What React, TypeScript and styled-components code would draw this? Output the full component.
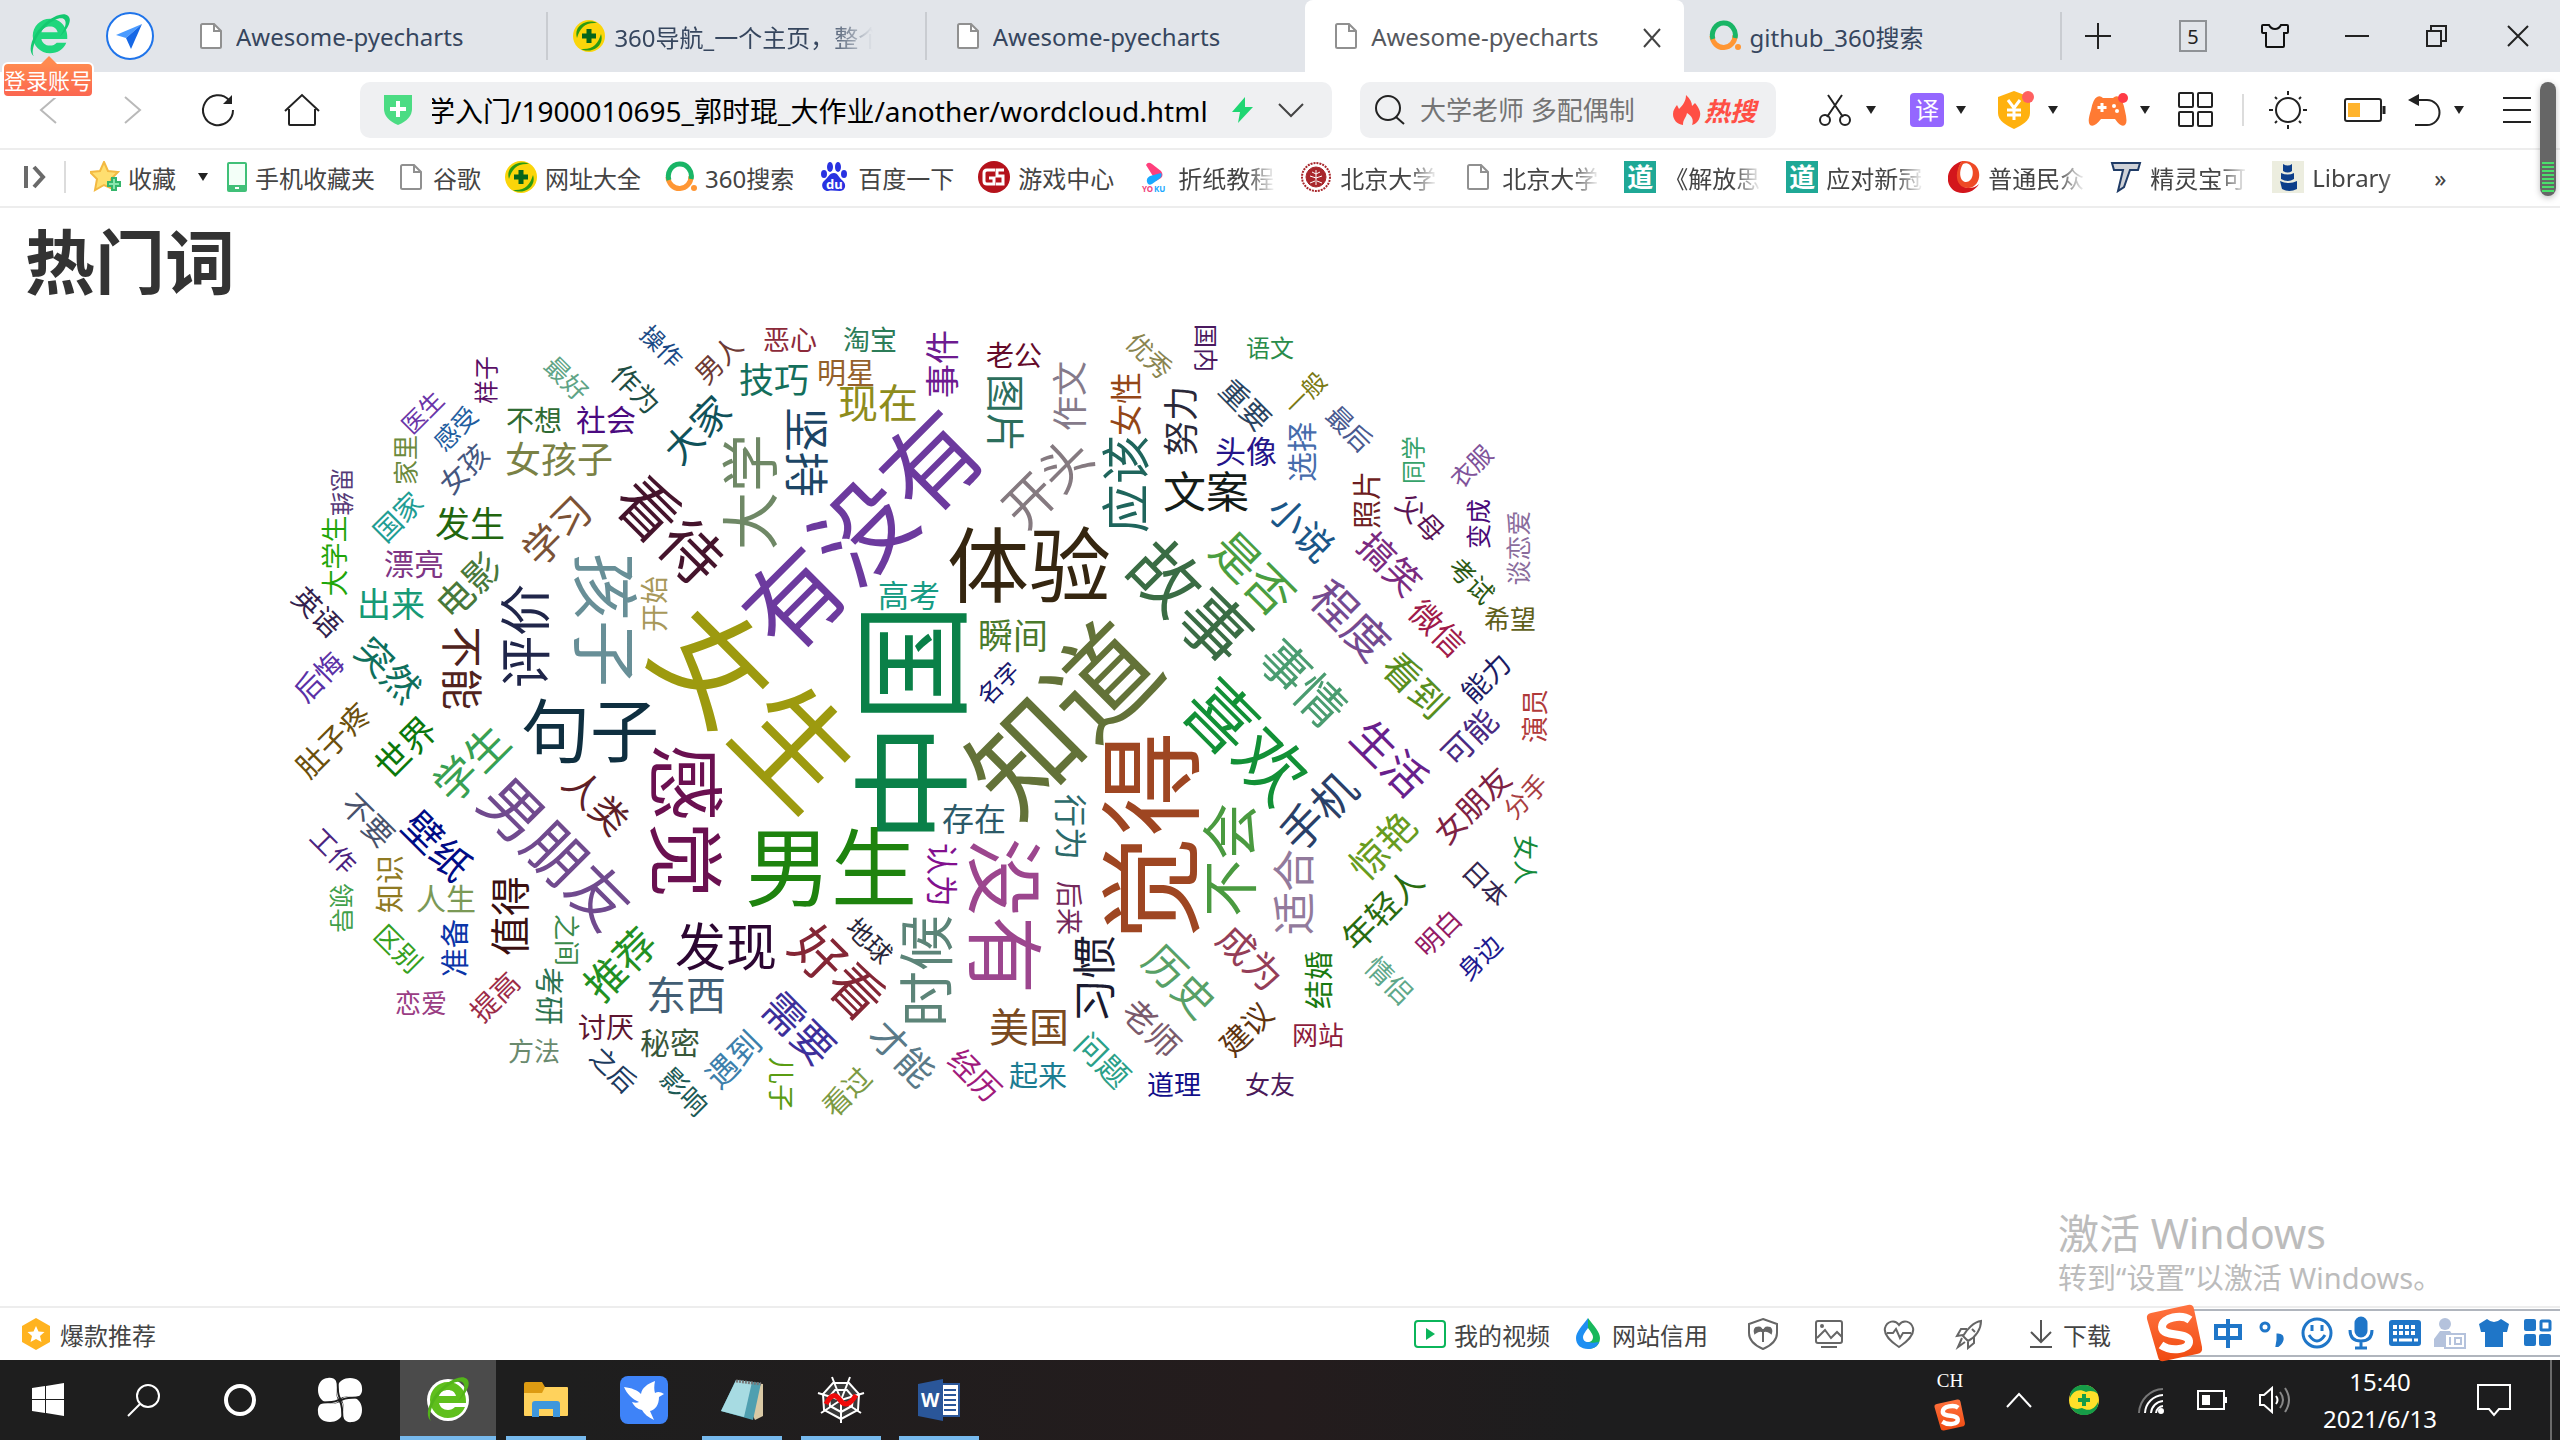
import React, { useLayoutEffect, useRef } from "react";
import styled, { createGlobalStyle, css } from "styled-components";

const FONT = `"Noto Sans", "Noto Sans CJK SC", sans-serif`;

const GlobalStyle = createGlobalStyle`
  * { box-sizing: border-box; }
  body { margin: 0; background: #fff; font-family: ${FONT}; overflow: hidden; }
  button { font: inherit; color: inherit; background: none; border: 0; padding: 0; cursor: pointer; }
  a { color: inherit; text-decoration: none; }
  svg { display: block; flex: none; }
`;

const Screen = styled.div`
  position: relative;
  display: flex;
  flex-direction: column;
  min-height: 100vh;
`;

/* ---------- tab strip ---------- */

const TabStrip = styled.header`
  display: flex;
  align-items: stretch;
  height: 72px;
  background: #e2e5ea;
`;

const StripButton = styled.button<{ $w: number }>`
  display: flex;
  align-items: center;
  justify-content: center;
  flex: none;
  width: ${(p) => p.$w}px;
  color: #222;
`;

const Gap = styled.span<{ $w: number }>`
  flex: none;
  width: ${(p) => p.$w}px;
`;

const TabList = styled.nav`
  display: flex;
  flex: 0 1 1892px;
  min-width: 0;
`;

const Tab = styled.a<{ $active?: boolean; $line?: boolean }>`
  display: flex;
  flex: 0 1 20%;
  min-width: 0;
  align-items: center;
  gap: 9px;
  padding: 0 54px 0 25px;
  font-size: 24px;
  color: #36465e;
  background: linear-gradient(#c9ccd1, #c9ccd1) right center / ${(p) => (p.$line ? 2 : 0)}px 48px no-repeat;
  ${(p) =>
    p.$active &&
    css`
      padding-right: 22px;
      background: #fff;
      color: #55585e;
      border-radius: 8px 8px 0 0;
    `}
`;

const TabTitle = styled.span<{ $fade?: boolean }>`
  flex: 1;
  min-width: 0;
  overflow: hidden;
  white-space: nowrap;
  ${(p) => p.$fade && css`mask-image: linear-gradient(90deg, #000 82%, transparent);`}
`;

const IconBox = styled.span`
  display: flex;
  flex: none;
  align-items: center;
  justify-content: center;
  width: 32px;
  height: 32px;
`;

const Spacer = styled.div`
  flex: 1;
`;

const TabCount = styled.span`
  display: flex;
  align-items: center;
  justify-content: center;
  width: 28px;
  height: 32px;
  border: 2px solid #8f9296;
  font-size: 20px;
`;

const LoginBadge = styled.a`
  position: absolute;
  top: 62px;
  left: 2px;
  z-index: 2;
  border: 2px solid #fff;
  border-radius: 6px;
  background: linear-gradient(#ff8a50, #fb6650);
  color: #fff;
  font-size: 22px;
  line-height: 32px;
  white-space: nowrap;
  &::before {
    content: "";
    position: absolute;
    top: -8px;
    left: 37px;
    border: 8px solid transparent;
    border-top: 0;
    border-bottom-color: #ff8a50;
  }
`;

/* ---------- address row ---------- */

const NavBar = styled.div`
  display: flex;
  align-items: center;
  height: 78px;
  padding: 2px 0 2px 6px;
  border-bottom: 2px solid #ededed;
`;

const Field = styled.div<{ $grow: number; $basis: number }>`
  display: flex;
  align-items: center;
  flex: ${(p) => p.$grow} 1 ${(p) => p.$basis}px;
  min-width: 0;
  height: 56px;
  border-radius: 10px;
  background: #eff0f2;
`;

const AddressInput = styled.input`
  flex: 1;
  min-width: 0;
  height: 44px;
  margin: 0 24px 0 20px;
  padding: 0;
  border: 0;
  outline: 0;
  background: none;
  font: 28px ${FONT};
  color: #000;
  text-align: right;
`;

const SearchInput = styled.input`
  flex: 1;
  min-width: 0;
  height: 44px;
  padding: 0;
  border: 0;
  outline: 0;
  background: none;
  font: 26px ${FONT};
  &::placeholder { color: #747474; opacity: 1; }
`;

const HotLink = styled.a`
  display: flex;
  align-items: center;
  gap: 3px;
  padding-right: 20px;
  color: #ff4f45;
  font-size: 26px;
  font-weight: 700;
  font-style: italic;
`;

const Tools = styled.div`
  display: flex;
  align-items: center;
  height: 100%;
  flex: none;
  padding-left: 40px;
  color: #222;
`;

const Tool = styled.button<{ $w: number }>`
  display: flex;
  align-items: center;
  gap: 12px;
  flex: none;
  width: ${(p) => p.$w}px;
  height: 56px;
`;

const Caret = styled.span`
  border: 5px solid transparent;
  border-top: 8px solid #222;
  border-bottom: 0;
`;

const Translate = styled.span`
  display: flex;
  align-items: center;
  justify-content: center;
  width: 34px;
  height: 34px;
  border-radius: 4px;
  background: #9467ff;
  color: #fff;
  font-size: 24px;
  line-height: 34px;
`;

const Divider = styled.span<{ $m: number }>`
  width: 2px;
  height: 32px;
  margin: 0 ${(p) => p.$m}px 0 0;
  background: #dcdcdc;
`;

/* ---------- bookmarks ---------- */

const Bookmarks = styled.nav`
  display: flex;
  align-items: center;
  gap: 24px;
  height: 58px;
  padding: 0 0 2px 24px;
  border-bottom: 2px solid #ededed;
  color: #444;
  font-size: 24px;
`;

const SidebarToggle = styled.button`
  display: flex;
  align-items: center;
  gap: 16px;
`;

const Favourites = styled.div`
  display: flex;
  align-items: center;
  gap: 22px;
  margin-right: -5px;
`;

const Bookmark = styled.a<{ $w?: number; $gap?: number }>`
  display: flex;
  align-items: center;
  flex: none;
  gap: ${(p) => p.$gap ?? 8}px;
  white-space: nowrap;
  span:last-child {
    ${(p) =>
      p.$w &&
      css`
        width: ${p.$w}px;
        overflow: hidden;
        mask-image: linear-gradient(90deg, #000 70%, transparent);
      `}
  }
`;

const Du = styled.span`
  display: flex;
  align-items: center;
  justify-content: center;
  width: 32px;
  height: 32px;
  background: #1fa896;
  color: #fff;
  font-size: 26px;
  font-weight: 700;
  line-height: 32px;
`;

/* ---------- page ---------- */

const Page = styled.main`
  position: relative;
  flex: 1;
  min-height: 960px;
  overflow: hidden;
`;

const Heading = styled.h1`
  margin: 0;
  padding: 2px 25px;
  font-size: 70px;
  line-height: 104px;
  font-weight: 700;
  color: #333;
`;

const Word = styled.span`
  position: absolute;
  line-height: 1;
  white-space: nowrap;
  transform-origin: 0 0;
`;

const ScrollThumb = styled.div`
  position: absolute;
  top: 82px;
  right: 4px;
  z-index: 3;
  width: 16px;
  height: 114px;
  padding: 80px 2px 4px;
  border-radius: 8px;
  background: #666;
  box-shadow: 0 2px 6px rgba(0, 0, 0, 0.25);
  &::after {
    content: "";
    display: block;
    height: 30px;
    background: repeating-linear-gradient(#49e06a 0 2px, #666 2px 4px);
  }
`;

const Watermark = styled.div`
  position: absolute;
  right: 100px;
  bottom: 8px;
  width: 402px;
  color: #bcbcbc;
  white-space: nowrap;
`;

const WatermarkTitle = styled.div`
  font-size: 41px;
  line-height: 48px;
`;

const WatermarkNote = styled.div`
  font-size: 29px;
  line-height: 41px;
`;

/* ---------- status bar ---------- */

const StatusBar = styled.footer`
  display: flex;
  align-items: center;
  height: 54px;
  padding: 0 449px 0 20px;
  border-top: 2px solid #ededed;
  color: #444;
  font-size: 24px;
`;

const StatusItem = styled.a<{ $gap: number; $ml: number }>`
  display: flex;
  align-items: center;
  gap: ${(p) => p.$gap}px;
  margin-left: ${(p) => p.$ml}px;
  white-space: nowrap;
`;

const ImeBar = styled.div`
  position: absolute;
  right: 0;
  bottom: 78px;
  z-index: 2;
  display: flex;
  align-items: center;
  width: 414px;
  height: 58px;
`;

const ImeKeys = styled.div`
  display: flex;
  flex: 1;
  align-items: center;
  height: 48px;
  margin-left: 24px;
  padding-left: 34px;
  border: 2px solid #b0b5bd;
  border-right: 0;
  background: #fff;
  color: #1f76c8;
`;

const ImeLogo = styled.span`
  position: absolute;
  left: 0;
  top: 0;
`;

const ImeKey = styled.button`
  display: flex;
  align-items: center;
  justify-content: center;
  flex: 1;
`;

/* ---------- taskbar ---------- */

const Taskbar = styled.footer`
  display: flex;
  align-items: stretch;
  height: 80px;
  background: linear-gradient(90deg, #1e1e1e 0 22%, #241c1d 50%, #1d1d1e 62%);
  color: #fff;
`;

const Task = styled.button<{ $w?: number; $open?: boolean; $focus?: boolean }>`
  display: flex;
  align-items: center;
  justify-content: center;
  flex: none;
  width: ${(p) => p.$w ?? 98}px;
  background: linear-gradient(#76b9ed, #76b9ed) center bottom / ${(p) => (p.$focus ? "100%" : p.$open ? "80px" : "0")} 4px no-repeat,
    ${(p) => (p.$focus ? "#4b4b4b" : "transparent")};
`;

const TrayStack = styled.div`
  display: flex;
  flex-direction: column;
  align-items: center;
  gap: 6px;
  width: 52px;
  padding-top: 9px;
  font: 19px/24px "Liberation Serif", "Noto Sans CJK SC", serif;
`;

const Clock = styled.div`
  display: flex;
  flex-direction: column;
  align-items: center;
  justify-content: center;
  flex: none;
  width: 116px;
  padding-bottom: 1px;
  font-size: 24px;
  line-height: 37px;
`;

const ShowDesktop = styled.button`
  width: 10px;
  border-left: 2px solid #6a6a6a;
`;

/* ---------- icons ---------- */

const DocIcon = () => (
  <svg width="24" height="28" viewBox="0 0 24 28" fill="#fff" stroke="#909090" strokeWidth="2">
    <path d="M2 3.500Q2 2 3.500 2H15l7 7v15.500q0 1.500-1.500 1.500h-17Q2 26 2 24.500z" />
    <path d="M15 2v7h7" fill="none" />
  </svg>
);

const Coin360 = ({ size = 32 }: { size?: number }) => (
  <svg width={size} height={size} viewBox="0 0 32 32">
    <circle cx="16" cy="16" r="16" fill="#fbd50a" />
    <path d="M4 18C0 6 14-2 24 3 12 2 7 8 4 18z" fill="#2b9a12" />
    <path d="M28 14c4 12-10 20-20 15 12 1 17-5 20-15z" fill="#2b9a12" />
    <path d="M16 9v14M9 16h14" stroke="#05641b" strokeWidth="5" />
  </svg>
);

const TrayCoin = () => (
  <svg width="30" height="30" viewBox="0 0 30 30">
    <circle cx="15" cy="15" r="15" fill="#ffe02a" />
    <path d="M1 13C0 4 9-1 17 0c6 1 10 5 12 9-5-4-9-3-12-2C10 3 4 6 1 13z" fill="#169c48" />
    <path d="M29 17c1 9-8 14-16 13-6-1-10-5-12-9 5 4 9 3 12 2 7 4 13 1 16-6z" fill="#169c48" />
    <path d="M15 9v12M9 15h12" stroke="#169c48" strokeWidth="4" />
  </svg>
);

const SearchRing = () => (
  <svg width="32" height="32" viewBox="0 0 32 32" fill="none" strokeWidth="5">
    <path d="M26 15a11.500 12 0 0 1-23 1" stroke="#ff9634" />
    <path d="M4 19a11.500 12 0 1 1 22-1" stroke="#19b566" />
    <circle cx="29" cy="27" r="3" fill="#ff9634" />
  </svg>
);

const BrowserE = ({ size, a, b, plate }: { size: number; a: string; b: string; plate?: boolean }) => (
  <svg width={size} height={size} viewBox="0 0 48 48">
    {plate && <circle cx="24" cy="24" r="21" fill="#fff" />}
    <path
      d="M24 6C14 6 6 14 6 24s8 18 18 18c8 0 14-4 17-11H31c-2 2-4 3-7 3-5 0-8-3-9-7h27c1-12-7-21-18-21zm-9 14c1-4 5-6 9-6s7 2 8 6z"
      fill={a}
    />
    <path d="M43 3c5 5-2 16-9 22 5-7 9-16 4-19-7-3-24 9-30 25-2 6-3 11-1 14-5-4-4-13 2-23C18 8 36-3 43 3z" fill={b} />
  </svg>
);

const CompassIcon = () => (
  <svg width="50" height="50" viewBox="0 0 50 50">
    <circle cx="25" cy="25" r="23" fill="#fff" stroke="#1f74ea" strokeWidth="2" />
    <path d="M37 13 11 24l10 3z" fill="#4a9bff" />
    <path d="M37 13 21 27l5 11z" fill="#1668e6" />
  </svg>
);

const Stroke = ({ w = 32, h = 32, sw = 2, d, color = "currentColor", children }: { w?: number; h?: number; sw?: number; d?: string; color?: string; children?: React.ReactNode }) => (
  <svg width={w} height={h} viewBox={`0 0 ${w} ${h}`} fill="none" stroke={color} strokeWidth={sw}>
    {d && <path d={d} />}
    {children}
  </svg>
);

const SogouLogo = ({ size }: { size: number }) => (
  <svg width={size} height={size} viewBox="0 0 58 58">
    <defs>
      <linearGradient id="sogou" x1="0" y1="0" x2="0" y2="1">
        <stop offset="0" stopColor="#ff7340" />
        <stop offset="1" stopColor="#f04a10" />
      </linearGradient>
    </defs>
    <path d="M5 9 42 1q5-1 6 4l8 38q1 6-5 7L18 57q-5 1-6-4L1 15q-1-5 4-6z" fill="url(#sogou)" />
    <path d="M44 16C36 10 16 13 16 23c0 11 26 4 27 14 1 9-18 11-28 4" fill="none" stroke="#fff" strokeWidth="8" />
  </svg>
);

/* ---------- word cloud data ---------- */

type WordRow = [text: string, x: number, y: number, size: number, angle: number, color: string];

// Word centres are measured in window pixels; the browser chrome takes the first 208.
const CHROME_HEIGHT = 208;

const WORDS: WordRow[] = [
  ["中国", 915, 723, 120, -90, "#0a8048"],
  ["女生", 754, 707, 115, 45, "#9d9a0f"],
  ["知道", 1065, 720, 108, -45, "#637238"],
  ["觉得", 1153, 836, 105, -90, "#9e4622"],
  ["有没有", 864, 532, 97, -45, "#6c3a9e"],
  ["男生", 831, 870, 86, 0, "#1e830e"],
  ["体验", 1029, 566, 82, 0, "#352610"],
  ["没有", 1003, 916, 78, 90, "#9c468e"],
  ["感觉", 684, 821, 77, 90, "#6a1050"],
  ["故事", 1189, 603, 70, 45, "#3a6c44"],
  ["喜欢", 1245, 742, 70, 45, "#129036"],
  ["句子", 590, 733, 69, 0, "#0f2f40"],
  ["孩子", 603, 620, 67, 90, "#688f97"],
  ["男朋友", 555, 854, 61, 45, "#704a8e"],
  ["看待", 669, 531, 61, 45, "#45142c"],
  ["大学", 752, 492, 58, -90, "#6f8866"],
  ["不会", 1231, 860, 57, -90, "#4a9a40"],
  ["时候", 927, 971, 56, -90, "#5c8478"],
  ["好看", 837, 973, 53, 45, "#842635"],
  ["评价", 527, 636, 52, -90, "#20264a"],
  ["开头", 1048, 483, 51, -45, "#857a80"],
  ["发现", 726, 948, 51, 0, "#2c0632"],
  ["应该", 1127, 484, 49, -90, "#1f655c"],
  ["事情", 1302, 684, 49, 45, "#4a9c70"],
  ["是否", 1252, 574, 47, 45, "#4a9e40"],
  ["坚持", 805, 452, 45, 90, "#1c4565"],
  ["程度", 1350, 621, 45, 45, "#744a90"],
  ["习惯", 1095, 979, 44, -90, "#1a1a30"],
  ["手机", 1319, 812, 44, -45, "#2a4068"],
  ["文案", 1206, 493, 43, 0, "#141c18"],
  ["适合", 1295, 892, 43, -90, "#927a9c"],
  ["生活", 1389, 759, 43, 45, "#68208c"],
  ["学生", 472, 764, 43, -45, "#38a052"],
  ["不能", 461, 668, 42, 90, "#50231d"],
  ["历史", 1179, 982, 41, 45, "#58a066"],
  ["推荐", 621, 965, 41, -45, "#229022"],
  ["需要", 798, 1029, 41, 45, "#3d2f9a"],
  ["值得", 511, 916, 40, -90, "#3a0f10"],
  ["现在", 878, 404, 40, 0, "#8e8c1c"],
  ["美国", 1029, 1028, 40, 0, "#7a4a20"],
  ["东西", 686, 996, 40, 0, "#425e74"],
  ["图片", 1005, 413, 39, 90, "#2c6e5c"],
  ["学习", 557, 531, 39, -45, "#7b5236"],
  ["壁纸", 437, 846, 39, 45, "#000b85"],
  ["惊艳", 1383, 846, 38, -45, "#689c1e"],
  ["大家", 697, 430, 38, -45, "#10525a"],
  ["突然", 388, 670, 37, 45, "#0e6f5c"],
  ["电影", 469, 586, 37, -45, "#48783a"],
  ["人类", 596, 802, 37, 45, "#5e2026"],
  ["才能", 902, 1054, 37, 45, "#5a7a88"],
  ["看到", 1415, 686, 37, 45, "#588e1e"],
  ["小说", 1301, 529, 37, 45, "#1a5688"],
  ["搞笑", 1389, 565, 36, 45, "#7a2a80"],
  ["成为", 1250, 958, 37, 45, "#943e58"],
  ["女孩子", 559, 461, 36, 0, "#7a8145"],
  ["发生", 470, 525, 35, 0, "#22660e"],
  ["世界", 406, 748, 35, -45, "#0b780b"],
  ["技巧", 774, 381, 35, 0, "#146f5c"],
  ["作文", 1071, 396, 35, -90, "#857a8a"],
  ["瞬间", 1013, 637, 35, 0, "#4a7a2c"],
  ["努力", 1182, 421, 35, -90, "#2a2838"],
  ["出来", 391, 605, 34, 0, "#179a76"],
  ["事件", 943, 364, 34, -90, "#6d1b90"],
  ["行为", 1070, 827, 33, 90, "#2c6a6a"],
  ["老师", 1151, 1029, 33, 45, "#7a5a6c"],
  ["年轻人", 1383, 910, 33, -45, "#2a6c10"],
  ["存在", 974, 820, 32, 0, "#2c5a68"],
  ["认为", 941, 875, 32, 90, "#82108e"],
  ["女性", 1127, 404, 32, -90, "#944616"],
  ["遇到", 734, 1060, 32, -45, "#3d7fab"],
  ["微信", 1437, 629, 32, 45, "#a01a4a"],
  ["可能", 1470, 738, 32, -45, "#4a2a82"],
  ["高考", 909, 596, 31, 0, "#179c84"],
  ["头像", 1246, 452, 31, 0, "#24148a"],
  ["女朋友", 1473, 806, 31, -45, "#7e2244"],
  ["问题", 1102, 1061, 31, 45, "#2aa088"],
  ["选择", 1303, 452, 30, -90, "#466cac"],
  ["社会", 606, 421, 30, 0, "#4a0a80"],
  ["漂亮", 414, 565, 30, 0, "#7e3585"],
  ["人生", 446, 900, 30, 0, "#7b9956"],
  ["秘密", 670, 1044, 30, 0, "#38583a"],
  ["肚子疼", 334, 741, 30, -45, "#6b4f0d"],
  ["不要", 367, 821, 30, 45, "#48526b"],
  ["经历", 974, 1076, 30, 45, "#a01a7c"],
  ["建议", 1247, 1030, 30, -45, "#5e3410"],
  ["知识", 390, 884, 29, -90, "#8f7a22"],
  ["准备", 455, 948, 29, -90, "#0a35a8"],
  ["考研", 549, 996, 29, 90, "#2c7350"],
  ["明星", 846, 373, 29, 0, "#94602a"],
  ["起来", 1038, 1076, 29, 0, "#1c7d92"],
  ["重要", 1245, 405, 29, 45, "#2a4460"],
  ["照片", 1367, 500, 29, -90, "#6e1e22"],
  ["结婚", 1319, 980, 29, -90, "#1a7a10"],
  ["不想", 534, 421, 28, 0, "#2f6b33"],
  ["开始", 655, 604, 28, -90, "#a8985a"],
  ["讨厌", 606, 1028, 28, 0, "#5e1530"],
  ["老公", 1014, 356, 28, 0, "#640a2a"],
  ["女孩", 464, 469, 28, -45, "#45567f"],
  ["国家", 398, 517, 28, -45, "#1f9d94"],
  ["英语", 317, 612, 28, 45, "#331f4d"],
  ["后悔", 319, 677, 28, -45, "#5a30a6"],
  ["提高", 495, 997, 28, -45, "#9c2c48"],
  ["看过", 847, 1092, 28, -45, "#7c9a44"],
  ["能力", 1486, 678, 28, -45, "#1c1c64"],
  ["作为", 636, 389, 28, 45, "#1d4d44"],
  ["大学生", 335, 556, 27, -90, "#1fa60a"],
  ["区别", 398, 949, 27, 45, "#35a020"],
  ["影响", 684, 1092, 27, 45, "#1c5a55"],
  ["男人", 719, 360, 27, -45, "#6e3a35"],
  ["恶心", 790, 340, 27, 0, "#8c2a3a"],
  ["淘宝", 870, 340, 27, 0, "#2c7c58"],
  ["后来", 1069, 908, 27, 90, "#74285a"],
  ["儿子", 781, 1084, 27, 90, "#5a9c12"],
  ["父母", 1420, 518, 27, 45, "#5a1454"],
  ["演员", 1535, 716, 27, -90, "#b03a3a"],
  ["情侣", 1389, 981, 27, 45, "#5fa88a"],
  ["道理", 1174, 1085, 27, 0, "#120f8a"],
  ["之间", 566, 940, 26, 90, "#3a8a4a"],
  ["恋爱", 421, 1004, 26, 0, "#9a3d84"],
  ["方法", 534, 1052, 26, 0, "#6a8a6e"],
  ["之后", 613, 1070, 26, 45, "#1c3a5e"],
  ["工作", 333, 851, 26, 45, "#4b2380"],
  ["优秀", 1149, 356, 26, 45, "#8a8550"],
  ["地球", 869, 941, 26, 45, "#282638"],
  ["最后", 1349, 429, 26, 45, "#4a5a90"],
  ["考试", 1471, 581, 26, 45, "#2c5a14"],
  ["希望", 1510, 620, 26, 0, "#60601a"],
  ["日本", 1485, 884, 26, 45, "#32244e"],
  ["明白", 1439, 933, 26, -45, "#941a64"],
  ["网站", 1318, 1036, 26, 0, "#8e1c3c"],
  ["最好", 566, 379, 25, 45, "#5fa486"],
  ["感受", 456, 429, 25, -45, "#1f5ea0"],
  ["家里", 406, 460, 25, -90, "#6b8a3d"],
  ["领导", 341, 908, 25, 90, "#3fa04a"],
  ["变成", 1479, 524, 25, -90, "#4a0a78"],
  ["谈恋爱", 1519, 548, 25, -90, "#8a6c9c"],
  ["分手", 1526, 797, 25, -45, "#a83e42"],
  ["女人", 1525, 860, 25, 90, "#148a3a"],
  ["身边", 1480, 958, 25, -45, "#201a90"],
  ["女友", 1270, 1085, 25, 0, "#4a1a5a"],
  ["操作", 661, 347, 24, 45, "#1a4a86"],
  ["样子", 487, 380, 24, -90, "#5a0f66"],
  ["医生", 423, 413, 24, -45, "#6a34a8"],
  ["思维", 341, 492, 24, 90, "#553a78"],
  ["名字", 999, 684, 24, -45, "#16166e"],
  ["国内", 1205, 348, 24, 90, "#4a1a60"],
  ["语文", 1270, 349, 24, 0, "#2a8c4a"],
  ["一般", 1306, 394, 24, -45, "#7a7a14"],
  ["同学", 1414, 460, 24, -90, "#36a26a"],
  ["衣服", 1472, 467, 24, -45, "#80529a"],
];

const WordCloud = () => (
  <>
    {WORDS.map(([text, x, y, size, angle, color]) => (
      <Word
        key={text}
        style={{
          left: x,
          top: y - CHROME_HEIGHT,
          fontSize: size,
          color,
          transform: `rotate(${angle}deg) translate(-50%, -53%)`,
        }}
      >
        {text}
      </Word>
    ))}
  </>
);

/* ---------- app ---------- */

export default function App() {
  const address = useRef<HTMLInputElement>(null);

  useLayoutEffect(() => {
    if (address.current) address.current.scrollLeft = address.current.scrollWidth;
  }, []);

  return (
    <Screen>
      <GlobalStyle />

      <TabStrip>
        <StripButton $w={100} aria-label="360">
          <BrowserE size={46} a="#1fd67c" b="#14c870" />
        </StripButton>
        <StripButton $w={60} aria-label="导航">
          <CompassIcon />
        </StripButton>
        <Gap $w={10} />
        <TabList>
          <Tab href="#t1" $line>
            <IconBox><DocIcon /></IconBox>
            <TabTitle>Awesome-pyecharts</TabTitle>
          </Tab>
          <Tab href="#t2" $line>
            <IconBox><Coin360 /></IconBox>
            <TabTitle $fade>360导航_一个主页，整个世界</TabTitle>
          </Tab>
          <Tab href="#t3">
            <IconBox><DocIcon /></IconBox>
            <TabTitle>Awesome-pyecharts</TabTitle>
          </Tab>
          <Tab href="#t4" $active>
            <IconBox><DocIcon /></IconBox>
            <TabTitle>Awesome-pyecharts</TabTitle>
            <Stroke w={20} h={26} color="#444" d="M2 6 18 24M18 6 2 24" />
          </Tab>
          <Tab href="#t5" $line>
            <IconBox><SearchRing /></IconBox>
            <TabTitle>github_360搜索</TabTitle>
          </Tab>
        </TabList>
        <StripButton $w={72} aria-label="新标签页">
          <Stroke w={28} h={28} d="M14 1v26M1 14h26" />
        </StripButton>
        <Spacer />
        <StripButton $w={82} aria-label="标签数"><TabCount>5</TabCount></StripButton>
        <StripButton $w={82} aria-label="皮肤">
          <Stroke w={30} h={26} color="#111" d="M9 2H3Q2 2 2 3v6q0 1 1 1h3v13q0 1 1 1h16q1 0 1-1V10h3q1 0 1-1V3q0-1-1-1h-6q-2 4-6 4T9 2z" />
        </StripButton>
        <StripButton $w={82} aria-label="最小化"><Stroke w={24} h={24} d="M0 12h24" /></StripButton>
        <StripButton $w={78} aria-label="还原">
          <Stroke w={24} h={24} d="M2 7h14v15H2zM6 7V2h15v15h-5" />
        </StripButton>
        <StripButton $w={84} aria-label="关闭"><Stroke w={24} h={24} d="M2 2 22 22M22 2 2 22" /></StripButton>
      </TabStrip>
      <LoginBadge href="#login">登录账号</LoginBadge>

      <NavBar>
        <StripButton $w={84} aria-label="后退"><Stroke color="#b9b9b9" d="M24 3 9 16l15 13" /></StripButton>
        <StripButton $w={86} aria-label="前进"><Stroke color="#b9b9b9" d="M8 3l15 13L8 29" /></StripButton>
        <StripButton $w={84} aria-label="刷新">
          <Stroke w={36} h={36}>
            <path d="M29 8A15 15 0 1 0 33 18" />
            <path d="M32 3v9h-9z" fill="currentColor" stroke="none" />
          </Stroke>
        </StripButton>
        <StripButton $w={84} aria-label="主页">
          <Stroke w={36} h={34} d="M1 18 18 2l17 16M5 16v15q0 1 1 1h24q1 0 1-1V16" />
        </StripButton>
        <Gap $w={16} />
        <Field $grow={1} $basis={972}>
          <Gap $w={24} />
          <svg width="28" height="30" viewBox="0 0 28 30">
            <path d="M0 0h28v14q0 10-14 16Q0 24 0 14z" fill="#4bdc83" />
            <path d="M14 6v16M6 14h16" stroke="#fff" strokeWidth="4" />
          </svg>
          <AddressInput ref={address} aria-label="地址" defaultValue="学入门/1900010695_郭时琨_大作业/another/wordcloud.html" />
          <svg width="22" height="26" viewBox="0 0 22 26">
            <path d="M13 0 0 15h8L6 26l15-16h-8z" fill="#1fd672" />
          </svg>
          <Gap $w={24} />
          <Stroke w={26} h={16} color="#444" d="M1 2l12 12L25 2" />
          <Gap $w={28} />
        </Field>
        <Gap $w={28} />
        <Field $grow={0} $basis={416}>
          <StripButton $w={60} aria-label="搜索">
            <Stroke color="#222"><circle cx="14" cy="14" r="12" /><path d="M22 23l8 7" /></Stroke>
          </StripButton>
          <SearchInput aria-label="搜索内容" placeholder="大学老师 多配偶制" />
          <HotLink href="#hot">
            <svg width="28" height="30" viewBox="0 0 28 30">
              <path d="M13 0c4 4 6 7 6 11l3-3c4 5 6 9 5 13-1 5-4 8-8 9 2-5 0-9-5-12-1 5-4 6-4 12C4 29 0 25 0 19c0-4 2-6 4-9l2 4c4-4 7-8 7-14z" fill="#ff4f45" />
            </svg>
            热搜
          </HotLink>
        </Field>
        <Tools>
          <Tool $w={94} aria-label="截图">
            <Stroke w={38}>
              <path d="M12 1l15 22M26 1 11 23" />
              <circle cx="9" cy="26" r="5" /><circle cx="29" cy="26" r="5" />
            </Stroke>
            <Caret />
          </Tool>
          <Tool $w={88} aria-label="翻译"><Translate>译</Translate><Caret /></Tool>
          <Tool $w={90} aria-label="优惠">
            <svg width="38" height="38" viewBox="4 0 38 38">
              <path d="M20 0 36 6v16c0 8-8 12-16 16C12 34 4 30 4 22V6z" fill="#ffb10f" />
              <path d="M14 9l6 8 6-8M20 17v12M13 19h14M13 24h14" fill="none" stroke="#fff" strokeWidth="3" />
              <circle cx="34" cy="6" r="6" fill="#ff6060" />
            </svg>
            <Caret />
          </Tool>
          <Tool $w={90} aria-label="游戏">
            <svg width="40" height="36" viewBox="0 0 40 36">
              <path d="M9 5q3-2 6 1h10q3-3 6-1 4 3 6 14 3 12 0 14-4 3-10-6H13Q6 36 2 33-1 30 3 18 5 7 9 5z" fill="#ff7a33" />
              <path d="M14 11v9M9.500 15.500h9" stroke="#fff" strokeWidth="3" />
              <circle cx="26" cy="14" r="2" fill="#fff" /><circle cx="29" cy="19" r="2" fill="#fff" />
              <circle cx="35" cy="6" r="5" fill="#ff3b46" />
            </svg>
            <Caret />
          </Tool>
          <Tool $w={64} aria-label="扩展">
            <Stroke w={36} h={36}>
              <rect x="1" y="1" width="14" height="14" rx="1" /><rect x="20" y="1" width="14" height="14" rx="1" />
              <rect x="1" y="20" width="14" height="14" rx="1" /><rect x="20" y="20" width="14" height="14" rx="1" />
            </Stroke>
          </Tool>
          <Divider $m={24} />
          <Tool $w={76} aria-label="护眼">
            <Stroke w={40} h={40}>
              <circle cx="20" cy="20" r="12" />
              <path d="M20 1v4M20 35v4M1 20h4M35 20h4M7 7l2 2M31 31l2 2M33 7l-2 2M9 31l-2 2" />
            </Stroke>
          </Tool>
          <Tool $w={64} aria-label="省电">
            <Stroke w={42} h={24}>
              <rect x="1" y="1" width="36" height="22" rx="2" />
              <path d="M4 5h12v14H4z" fill="#ffb42e" stroke="none" />
              <path d="M40 8v8" strokeWidth="3" />
            </Stroke>
          </Tool>
          <Tool $w={94} aria-label="恢复">
            <Stroke w={34} h={32}>
              <path d="M8 6h11a12 12 0 0 1 0 25H7" />
              <path d="M0 6l11-6v12z" fill="currentColor" stroke="none" />
            </Stroke>
            <Caret />
          </Tool>
          <Tool $w={58} aria-label="菜单"><Stroke w={30} h={28} d="M1 2h28M1 14h28M1 26h28" /></Tool>
        </Tools>
      </NavBar>

      <Bookmarks>
        <SidebarToggle aria-label="侧边栏">
          <Stroke w={24} h={24} sw={4} color="#6a6a6a" d="M2 1v22M10 2l9 10-9 10" />
          <Divider $m={0} />
        </SidebarToggle>
        <Favourites>
          <Bookmark href="#fav" $gap={6}>
            <svg width="32" height="32" viewBox="0 0 32 32">
              <path d="M14 1l4 9 10 1-7 7 2 10-9-4-9 5 2-11-7-7 10-1z" fill="#ffdf70" stroke="#f3b942" strokeWidth="2" />
              <path d="M24 16v14M17 23h14" stroke="#35b56b" strokeWidth="6" />
              <path d="M24 18v10M19 23h10" stroke="#8ae6ae" strokeWidth="2" />
            </svg>
            <span>收藏</span>
          </Bookmark>
          <Caret />
        </Favourites>
        <Bookmark href="#m" $gap={8}>
          <svg width="20" height="30" viewBox="0 0 20 30">
            <rect width="20" height="30" rx="2" fill="#40c078" />
            <rect x="2" y="2" width="16" height="21" fill="#f3fff8" />
            <path d="M8 26h4" stroke="#fff" strokeWidth="2" />
          </svg>
          <span>手机收藏夹</span>
        </Bookmark>
        <Bookmark href="#g" $gap={10}><DocIcon /><span>谷歌</span></Bookmark>
        <Bookmark href="#n"><Coin360 /><span>网址大全</span></Bookmark>
        <Bookmark href="#s"><SearchRing /><span>360搜索</span></Bookmark>
        <Bookmark href="#b">
          <IconBox>
            <svg width="26" height="30" viewBox="0 0 26 30" fill="#2932e1">
              <ellipse cx="3" cy="12" rx="3" ry="4" /><ellipse cx="9" cy="5" rx="3" ry="5" />
              <ellipse cx="17" cy="5" rx="3" ry="5" /><ellipse cx="23" cy="12" rx="3" ry="4" />
              <path d="M13 11c4 0 5 5 9 8 4 4 2 10-3 10-4 0-8-1-12 0-5 0-8-6-4-10 4-3 5-8 10-8z" />
              <text x="5" y="27" fontSize="13" fontWeight="700" fill="#fff">du</text>
            </svg>
          </IconBox>
          <span>百度一下</span>
        </Bookmark>
        <Bookmark href="#y">
          <svg width="32" height="32" viewBox="0 0 32 32">
            <circle cx="16" cy="16" r="16" fill="#b5121b" />
            <path d="M17 9H9q-3 0-3 3v8q0 3 3 3h7v-6h-5M26 9h-7v6h6v8h-7" fill="none" stroke="#fff" strokeWidth="3" />
          </svg>
          <span>游戏中心</span>
        </Bookmark>
        <Bookmark href="#z" $w={98}>
          <svg width="32" height="32" viewBox="0 0 32 32">
            <path d="M8 4q2-4 6-1l9 7q3 4 0 7l-5 3z" fill="#ff3f7c" />
            <path d="M9 21q-1-4 3-6l11-3q2 3-2 6l-7 5q-4 2-5-2z" fill="#19a8ff" />
            <text x="4" y="31" fontSize="8" fontWeight="700" fill="#f0447c">YO</text>
            <text x="16" y="31" fontSize="8" fontWeight="700" fill="#19a8ff">KU</text>
          </svg>
          <span>折纸教程</span>
        </Bookmark>
        <Bookmark href="#p" $w={98}>
          <svg width="32" height="32" viewBox="0 0 32 32" fill="none" stroke="#a8262b">
            <circle cx="16" cy="16" r="14" strokeWidth="2" strokeDasharray="2 1" />
            <circle cx="16" cy="16" r="10" fill="#a8262b" />
            <path d="M16 9v15M16 13l-4-2M16 13l4-2M16 17l-6-2M16 17l6-2M15 20l-5 2M17 20l5 2" stroke="#fff" />
          </svg>
          <span>北京大学</span>
        </Bookmark>
        <Bookmark href="#q" $w={98}><IconBox><DocIcon /></IconBox><span>北京大学</span></Bookmark>
        <Bookmark href="#d1" $w={98}><Du>道</Du><span>《解放思</span></Bookmark>
        <Bookmark href="#d2" $w={98}><Du>道</Du><span>应对新冠</span></Bookmark>
        <Bookmark href="#c" $w={98}>
          <svg width="32" height="32" viewBox="0 0 32 32">
            <path d="M14 0C-4 6-4 26 9 31c9 3 18-1 22-8-3 3-7 4-10 4C10 27 6 12 14 0z" fill="#d3161c" />
            <path d="M14 0C5 12 8 28 21 27c12-2 14-20 3-25-3-2-7-2-10-2z" fill="#ee4a26" />
            <path d="M15 3c-5 8-3 18 3 18 7 0 9-12 4-17-2-2-5-2-7-1z" fill="#fff" />
          </svg>
          <span>普通民众</span>
        </Bookmark>
        <Bookmark href="#j" $w={98}>
          <svg width="32" height="32" viewBox="0 0 32 32">
            <path d="M2 2h28l-2 7h-8l-6 17-6 4 5-21H4z" fill="#cfd2d8" stroke="#1f3b66" strokeWidth="2" />
          </svg>
          <span>精灵宝可</span>
        </Bookmark>
        <Bookmark href="#l" $w={98}>
          <svg width="32" height="32" viewBox="0 0 32 32">
            <path d="M0 0h32v32H0z" fill="#eceddf" />
            <path d="M11 3q5 3 9 0v7q-4 3-9 0zM9 12q7 3 13 0v6q-6 4-13 0zM8 20q9 4 17 0v8q-8 4-15 0z" fill="#0d3f8a" />
          </svg>
          <span>Library</span>
        </Bookmark>
        <span>»</span>
      </Bookmarks>
      <ScrollThumb />

      <Page>
        <Heading>热门词</Heading>
        <WordCloud />
        <Watermark>
          <WatermarkTitle>激活 Windows</WatermarkTitle>
          <WatermarkNote>转到“设置”以激活 Windows。</WatermarkNote>
        </Watermark>
      </Page>

      <StatusBar>
        <StatusItem href="#hot-list" $gap={8} $ml={0}>
          <svg width="32" height="32" viewBox="0 0 32 32">
            <path d="M16 0 30 8v16l-14 8L2 24V8z" fill="#ffb320" />
            <path d="M16 8l2.500 5.500 6 .5-4.500 4 1.500 6-5.500-3-5.500 3 1.500-6-4.500-4 6-.5z" fill="#fff" />
          </svg>
          爆款推荐
        </StatusItem>
        <Spacer />
        <StatusItem href="#video" $gap={8} $ml={0}>
          <svg width="32" height="28" viewBox="0 0 32 28">
            <rect x="1" y="1" width="30" height="26" rx="3" fill="#fff" stroke="#0bb55a" strokeWidth="2" />
            <path d="M12 8l9 6-9 6z" fill="#0bb55a" />
          </svg>
          我的视频
        </StatusItem>
        <StatusItem href="#credit" $gap={10} $ml={24}>
          <svg width="28" height="32" viewBox="0 0 28 32">
            <path d="M14 0c6 8 12 14 12 20 0 7-5 11-12 11V24c3 0 5-2 5-5 0-2-2-5-5-9z" fill="#18b85c" />
            <path d="M14 0C8 8 2 14 2 20c0 7 5 11 12 11 5 0 9-2 11-7-5 1-8 1-11 0-3 0-5-2-5-5 0-2 2-5 5-9z" fill="#1e8ff2" />
          </svg>
          网站信用
        </StatusItem>
        <StatusItem href="#safe" $gap={0} $ml={38} aria-label="安全">
          <Stroke w={34} h={34} color="#666">
            <path d="M17 2 31 7v9q0 10-14 16Q3 26 3 16V7zM17 12v13" />
            <path d="M16 14q-1-5-6-3-2 2-1 5 4-3 7-2zM18 14q1-5 6-3 2 2 1 5-4-3-7-2z" fill="#666" />
          </Stroke>
        </StatusItem>
        <StatusItem href="#pic" $gap={0} $ml={34} aria-label="图片">
          <Stroke w={30} h={32} color="#666">
            <rect x="2" y="3" width="26" height="22" rx="2" />
            <path d="M3 20l8-8 6 8 6-6 5 5M7 29h16" /><circle cx="8" cy="8" r="1" />
          </Stroke>
        </StatusItem>
        <StatusItem href="#health" $gap={0} $ml={39} aria-label="医生">
          <Stroke w={32} h={30} color="#666" d="M16 28C4 20 1 13 2 9c2-7 10-9 14-3 4-6 12-4 14 3 1 4-2 11-14 19zM4 14h6l3-4 4 9 3-5h8" />
        </StatusItem>
        <StatusItem href="#speed" $gap={0} $ml={38} aria-label="加速">
          <Stroke w={32} h={32} color="#666" d="M28 3c-7 1-14 8-18 15l5 5c8-4 13-12 13-20zM14 11H8l-4 7 6-1M21 19v6l-6 5v-6M9 20l-4 9 7-5M19 11l3 3" />
        </StatusItem>
        <StatusItem href="#dl" $gap={8} $ml={42}>
          <Stroke w={28} h={30} color="#555" d="M14 1v21M4 13l10 10 10-10M3 28h22" />
          下载
        </StatusItem>
      </StatusBar>

      <ImeBar>
        <ImeKeys>
          <ImeKey aria-label="中文">
            <Stroke w={32} h={32} sw={4} d="M4 9h24v12H4zM16 2v29" />
          </ImeKey>
          <ImeKey aria-label="标点">
            <Stroke w={26} h={28} sw={3}><circle cx="6" cy="8" r="4" /><path d="M19 16q5 0 4 5-1 4-5 6l1-6z" fill="currentColor" /></Stroke>
          </ImeKey>
          <ImeKey aria-label="表情">
            <Stroke w={34} h={34} sw={3}>
              <circle cx="17" cy="17" r="14" /><path d="M9 19q8 12 16 0" /><path d="M12 9v6M22 9v6" />
            </Stroke>
          </ImeKey>
          <ImeKey aria-label="语音">
            <Stroke w={28} h={34} sw={3}>
              <rect x="9" y="2" width="10" height="18" rx="5" fill="currentColor" />
              <path d="M3 14q0 11 11 11t11-11M14 25v8M8 32h12" />
            </Stroke>
          </ImeKey>
          <ImeKey aria-label="键盘">
            <svg width="34" height="28" viewBox="0 0 34 28">
              <rect x="1" y="1" width="32" height="26" rx="3" fill="#1f76c8" />
              <path d="M5 8h24M5 14h24" stroke="#fff" strokeWidth="4" strokeDasharray="4 2" />
              <path d="M5 21h4M11 21h13M26 21h4" stroke="#fff" strokeWidth="3" />
            </svg>
          </ImeKey>
          <ImeKey aria-label="账号">
            <svg width="34" height="32" viewBox="0 0 34 32">
              <circle cx="13" cy="7" r="6" fill="#b4c2dc" />
              <path d="M2 30V22l6-8h10l2 3v13z" fill="#b4c2dc" />
              <rect x="13" y="17" width="20" height="14" fill="#fff" stroke="#b4c2dc" strokeWidth="2" />
              <path d="M18 20v8M23 21h6v6h-6z" fill="none" stroke="#b4c2dc" strokeWidth="2" />
            </svg>
          </ImeKey>
          <ImeKey aria-label="皮肤">
            <svg width="30" height="28" viewBox="0 0 30 28" fill="#1f76c8"><path d="M8 0q7 6 14 0l8 5-2 8h-4v15H6V13H2L0 5z" /></svg>
          </ImeKey>
          <ImeKey aria-label="工具箱">
            <svg width="28" height="28" viewBox="0 0 28 28" fill="#1f76c8">
              <rect width="12" height="12" rx="2" /><rect y="15" width="12" height="12" rx="2" /><rect x="15" y="15" width="12" height="12" rx="2" />
              <rect x="17" y="2" width="9" height="9" rx="1" fill="#fff" stroke="#1f76c8" strokeWidth="3" />
            </svg>
          </ImeKey>
        </ImeKeys>
        <ImeLogo><SogouLogo size={58} /></ImeLogo>
      </ImeBar>

      <Taskbar>
        <Task $w={96} aria-label="开始">
          <svg width="32" height="34" viewBox="0 0 32 34" fill="#fff"><path d="M0 5l13-2v13H0zM14 3l18-3v16H14zM0 17h13v13L0 28zM14 17h18v16l-18-3z" /></svg>
        </Task>
        <Task $w={96} aria-label="搜索"><Stroke w={34} h={34}><circle cx="21" cy="13" r="11" /><path d="M13 21 1 33" /></Stroke></Task>
        <Task $w={96} aria-label="Cortana"><Stroke w={34} h={34} sw={4}><circle cx="17" cy="17" r="14" /></Stroke></Task>
        <Task $w={104} aria-label="四叶草">
          <svg width="46" height="46" viewBox="0 0 46 46" fill="#fff">
            <path d="M11 1c7-1 10 4 9 10-1 5-1 9 2 13-3 3-8 3-12 2C4 24 1 19 1 13 1 6 5 1 11 1z" />
            <path d="M45 11c1 7-4 10-10 9-5-1-9-1-13 2-3-3-3-8-2-12C22 4 27 1 33 1c7 0 12 4 12 10z" />
            <path d="M35 45c-7 1-10-4-9-10 1-5 1-9-2-13 3-3 8-3 12-2 6 2 9 7 9 13 0 7-4 12-10 12z" />
            <path d="M1 35c-1-7 4-10 10-9 5 1 9 1 13-2 3 3 3 8 2 12-2 6-7 9-13 9-7 0-12-4-12-10z" />
            <path d="M20 2c2 8-1 15 4 21M44 20c-8 2-15-1-21 4M26 44c-2-8 1-15-4-21M2 26c8-2 15 1 21-4" fill="none" stroke="#1e1e1e" strokeWidth="2" />
          </svg>
        </Task>
        <Gap $w={8} />
        <Task $w={96} $focus aria-label="360安全浏览器"><BrowserE size={48} a="#5fbf1c" b="#53b41a" plate /></Task>
        <Task $w={100} $open aria-label="文件资源管理器">
          <svg width="44" height="36" viewBox="0 0 44 36">
            <rect y="5" width="44" height="29" rx="1" fill="#ffd25c" /><path d="M0 6V2q0-2 2-2h16l3 5-3 6H0z" fill="#dd9b12" />
            <path d="M8 35V22q0-3 3-3h22q3 0 3 3v13h-7v-8H15v8z" fill="#3f97dc" />
          </svg>
        </Task>
        <Task $w={96} aria-label="蜂鸟">
          <svg width="48" height="48" viewBox="0 0 48 48">
            <rect width="48" height="48" rx="8" fill="#3e83f8" />
            <path d="M4 11c8 1 13 3 17 7 1-6 6-10 14-13-1 5-1 9 0 12 3-2 6-1 9 1l-5 3c0 8-4 13-9 14l4 9c-6-3-10-6-12-10-5-1-8-4-10-8 3 1 5 1 7 0-7-3-12-8-15-15z" fill="#fff" />
          </svg>
        </Task>
        <Task $w={100} $open aria-label="记事本">
          <svg width="44" height="42" viewBox="0 0 44 42">
            <path d="M16 2 43 5v32l-8 4z" fill="#d9c9a5" />
            <path d="M16 1 41 4 33 41 1 32z" fill="#4f9fb0" /><path d="M16 1 32 3 24 38 1 32z" fill="#a7dbe2" />
            <path d="M16 2l25 3" stroke="#777" strokeWidth="3" strokeDasharray="2 1" />
          </svg>
        </Task>
        <Task $w={98} $open aria-label="Spyder">
          <Stroke w={48} h={48} color="#fff">
            <path d="M16 7h16l10 11-1 16-17 9-17-9L6 18z" fill="#3a3a3a" />
            <path d="M24 24 15 1M24 24 33 1M24 24 1 17M24 24l23-7M24 24 4 37M24 24l20 13M24 24v23M18 14h12l6 7-1 9-11 6-11-6-1-9z" />
            <path d="M9 28q7-14 14-4t16-5" stroke="#f00a0a" strokeWidth="5" />
          </Stroke>
        </Task>
        <Task $w={98} $open aria-label="Word">
          <svg width="42" height="42" viewBox="0 0 42 42">
            <path d="M22 5h19v32H22z" fill="#fff" stroke="#2a5699" strokeWidth="2" />
            <path d="M26 11h12M26 16h12M26 21h12M26 26h12M26 31h12" stroke="#2a5699" strokeWidth="2" />
            <path d="M0 5 25 0v42L0 37z" fill="#2a5699" />
            <text x="3" y="28" fontSize="19" fontWeight="700" fill="#fff">W</text>
          </svg>
        </Task>
        <Spacer />
        <TrayStack>CH<SogouLogo size={32} /></TrayStack>
        <Task $w={86} aria-label="显示隐藏的图标"><Stroke w={28} h={16} d="M2 15 14 2l12 13" /></Task>
        <Task $w={44} aria-label="360安全卫士"><TrayCoin /></Task>
        <Task $w={90} aria-label="网络">
          <Stroke w={26} h={28}>
            <path d="M1 27A25 25 0 0 1 25 3" stroke="#777" /><path d="M7 27A19 19 0 0 1 25 9M13 27a13 13 0 0 1 12-12M18 27a8 8 0 0 1 7-7" />
            <circle cx="23" cy="25" r="2" fill="#fff" />
          </Stroke>
        </Task>
        <Task $w={32} aria-label="电池">
          <Stroke w={30} h={22}><path d="M1 2h26v18H1zM29 8v6" /><path d="M5 6h8v10H5z" fill="#fff" stroke="none" /></Stroke>
        </Task>
        <Task $w={94} aria-label="音量">
          <Stroke w={34} h={28}>
            <path d="M2 9h4l8-7v24l-8-7H2zM18 10q3 4 0 8" /><path d="M22 6q6 8 0 16M27 2q8 12 0 24" stroke="#888" />
          </Stroke>
        </Task>
        <Clock><span>15:40</span><span>2021/6/13</span></Clock>
        <Task $w={112} aria-label="通知"><Stroke w={34} h={34} d="M1 2h32v24H22l-5 6-5-6H1z" /></Task>
        <ShowDesktop aria-label="显示桌面" />
      </Taskbar>
    </Screen>
  );
}
